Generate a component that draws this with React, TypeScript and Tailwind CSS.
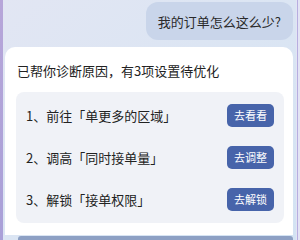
const items = [
  { label: "1、前往「单更多的区域」", action: "去看看" },
  { label: "2、调高「同时接单量」", action: "去调整" },
  { label: "3、解锁「接单权限」", action: "去解锁" },
];

export default function App() {
  return (
    <div
      className="flex h-[240px] w-[300px] overflow-hidden bg-gradient-to-br from-[#e2e6f3] via-[#dbe5f3] to-[#d3e3f3] text-[#222]"
      style={{ fontFamily: '"Noto Sans CJK SC", "Noto Sans", sans-serif' }}
    >
      <div className="w-[3px] shrink-0 bg-gradient-to-b from-[#b7a6d9] to-[#a9a0d8]" />

      <div className="flex w-[293px] shrink-0 flex-col pl-[2px] pr-[3px] pt-[2px]">
        <div className="flex h-[41px] items-center self-end rounded-[12px] bg-[#c9d5ea] px-[12px] text-[13px] leading-none text-[#2a2a2a]">
          我的订单怎么这么少?
        </div>

        <div className="mt-[7px] flex flex-col rounded-t-[10px] bg-white px-[11px] pb-[12px] pt-[15px]">
          <div className="pl-[1px] text-[13px] leading-[18px]">
            已帮你诊断原因，有3项设置待优化
          </div>

          <div className="mt-[12px] mr-[-2px] flex flex-col gap-[19px] rounded-[8px] bg-[#f0f2f7] px-[10px] py-[12px]">
            {items.map((item) => (
              <div key={item.action} className="flex h-[23px] items-center justify-between">
                <span className="text-[13px] leading-none">{item.label}</span>
                <button className="h-[23px] w-[47px] rounded-[5px] bg-[#4764aa] text-[11px] leading-none text-white">
                  {item.action}
                </button>
              </div>
            ))}
          </div>
        </div>

        <div className="mt-[1px] ml-[13px] h-[4px] rounded-t-[3px] bg-[#8da0c4]" />
      </div>

      <div className="flex w-[4px] shrink-0 bg-[#e3e4f4]">
        <div className="ml-[1px] w-[1px] bg-[#b7aee0]" />
      </div>
    </div>
  );
}
